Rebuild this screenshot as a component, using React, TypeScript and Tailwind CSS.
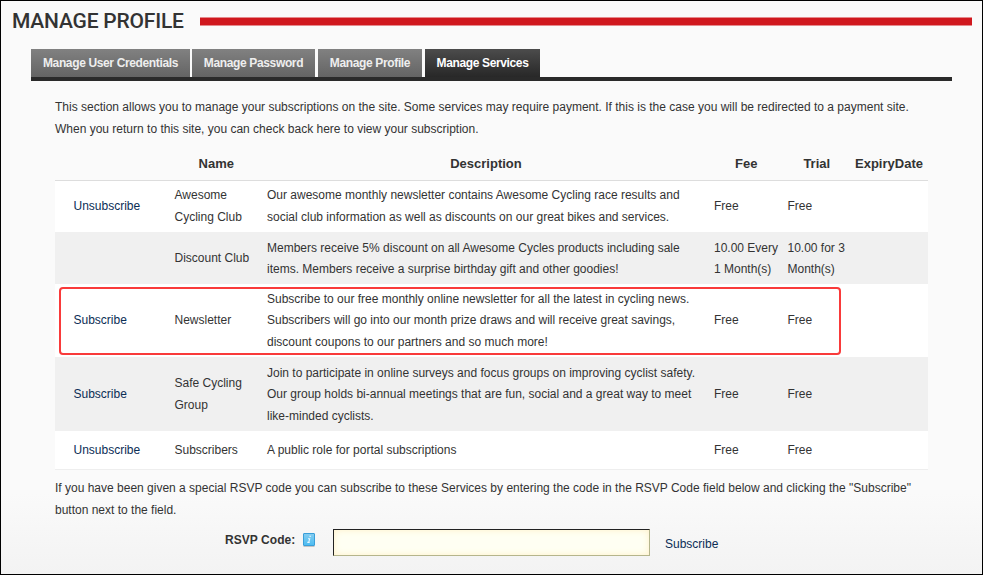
const tabs = [
  { label: 'Manage User Credentials', box: 'w-[159px] mr-[2px]' },
  { label: 'Manage Password', box: 'w-[123px] mr-[3px]' },
  { label: 'Manage Profile', box: 'w-[104px] mr-[3px]' },
];

type Row = {
  action: string;
  name: string[];
  description: string[];
  fee: string[];
  trial: string[];
  className: string;
};

const rows: Row[] = [
  {
    action: 'Unsubscribe',
    name: ['Awesome', 'Cycling Club'],
    description: [
      'Our awesome monthly newsletter contains Awesome Cycling race results and',
      'social club information as well as discounts on our great bikes and services.',
    ],
    fee: ['Free'],
    trial: ['Free'],
    className: 'h-[51px] bg-white',
  },
  {
    action: '',
    name: ['Discount Club'],
    description: [
      'Members receive 5% discount on all Awesome Cycles products including sale',
      'items. Members receive a surprise birthday gift and other goodies!',
    ],
    fee: ['10.00 Every', '1 Month(s)'],
    trial: ['10.00 for 3', 'Month(s)'],
    className: 'h-[52px] bg-[#f0f0f0] pt-[2.4px]',
  },
  {
    action: 'Subscribe',
    name: ['Newsletter'],
    description: [
      'Subscribe to our free monthly online newsletter for all the latest in cycling news.',
      'Subscribers will go into our month prize draws and will receive great savings,',
      'discount coupons to our partners and so much more!',
    ],
    fee: ['Free'],
    trial: ['Free'],
    className: 'h-[73px] bg-white pt-[1.2px]',
  },
  {
    action: 'Subscribe',
    name: ['Safe Cycling', 'Group'],
    description: [
      'Join to participate in online surveys and focus groups on improving cyclist safety.',
      'Our group holds bi-annual meetings that are fun, social and a great way to meet',
      'like-minded cyclists.',
    ],
    fee: ['Free'],
    trial: ['Free'],
    className: 'h-[74px] bg-[#f0f0f0] pt-[2px]',
  },
  {
    action: 'Unsubscribe',
    name: ['Subscribers'],
    description: ['A public role for portal subscriptions'],
    fee: ['Free'],
    trial: ['Free'],
    className: 'h-[38px] bg-white pt-[2px]',
  },
];

const columns = 'grid grid-cols-[115.5px_92.5px_447px_73.5px_67.5px_77px]';

function Lines({ items }: { items: string[] }) {
  return (
    <div className="pl-1">
      {items.map((item) => (
        <div key={item}>{item}</div>
      ))}
    </div>
  );
}

function InfoIcon() {
  return (
    <svg width="14" height="15" viewBox="0 0 14 15">
      <defs>
        <linearGradient id="info" x1="0" y1="0" x2="0" y2="1">
          <stop offset="0" stopColor="#86cdf0" />
          <stop offset="1" stopColor="#4cbcf2" />
        </linearGradient>
      </defs>
      <rect x="1.5" y="12.5" width="11" height="1.5" fill="#c4c4c4" />
      <rect x="1.5" y="0.5" width="11" height="12" rx="0.5" fill="url(#info)" stroke="#3a9fd9" />
      <path d="M7.4 3.3h1.6M6 5.8h1.7l-1 3.5M5.3 9.4h2.4" stroke="#e8f7ff" strokeWidth="1.1" fill="none" />
    </svg>
  );
}

export default function App() {
  return (
    <div className="h-[575px] w-[983px] overflow-hidden whitespace-nowrap border border-black bg-[linear-gradient(#fafafa_86%,#f3f3f3)] font-['Liberation_Sans',Arial,sans-serif] text-[12px] leading-[21.6px] text-[#333]">
      <header className="flex h-[48px] pl-[11px]">
        <h1 className="h-[40px] w-[188px] font-[Roboto,sans-serif] text-[21px] font-medium leading-[40px] tracking-[-0.2px] text-[#333]">
          MANAGE PROFILE
        </h1>
        <div className="mt-[16px] h-[9px] w-[772px] border-y border-[#e58a8d] bg-[#d0181e]" />
      </header>

      <nav className="ml-[30px] flex h-[32px] w-[921px] border-b-4 border-[#2a2a2a] font-bold leading-[28px] tracking-[-0.36px]">
        {tabs.map((tab) => (
          <div key={tab.label} className={'flex h-[28px] justify-center bg-linear-to-b from-[#818181] to-[#646464] text-[#eee] ' + tab.box}>
            {tab.label}
          </div>
        ))}
        <div className="flex h-[28px] w-[115px] justify-center bg-linear-to-b from-[#4c4c4c] to-[#282828] text-white">
          Manage Services
        </div>
      </nav>

      <main className="ml-[54px] w-[873px]">
        <div className="h-[65px] pt-[16px]">
          <p>This section allows you to manage your subscriptions on the site. Some services may require payment. If this is the case you will be redirected to a payment site.</p>
          <p>When you return to this site, you can check back here to view your subscription.</p>
        </div>

        <div className={columns + ' h-[35px] border-b border-[#ddd] text-center text-[13px] font-bold leading-[35px]'}>
          <span />
          <span className="-ml-px">Name</span>
          <span className="-ml-px">Description</span>
          <span className="-ml-px">Fee</span>
          <span className="-ml-px">Trial</span>
          <span className="-ml-px">ExpiryDate</span>
        </div>

        <div className="relative border-b border-[#eee]">
          {rows.map((row) => (
            <div key={row.name[0]} className={columns + ' items-center ' + row.className}>
              <a className="pl-[18.5px] text-[#0b2d55]">{row.action}</a>
              <Lines items={row.name} />
              <Lines items={row.description} />
              <Lines items={row.fee} />
              <Lines items={row.trial} />
            </div>
          ))}
          <div className="absolute left-[4px] top-[106px] h-[68px] w-[782px] rounded-[4px] border-2 border-[#f93a3a]" />
        </div>

        <div className="pt-[8px]">
          <p>If you have been given a special RSVP code you can subscribe to these Services by entering the code in the RSVP Code field below and clicking the "Subscribe"</p>
          <p>button next to the field.</p>
        </div>

        <div className="flex pl-[170px] pt-[8px]">
          <label className="w-[77px] pt-px text-[12px] font-bold tracking-[0.06px]">RSVP Code:</label>
          <div className="w-[31px] pt-[4px]">
            <InfoIcon />
          </div>
          <input className="h-[27px] w-[317px] border border-b-[#b5b58c] border-l-[#222] border-r-[#b5b58c] border-t-[#222] bg-[#fffff3] shadow-[inset_0_0_7px_#fff0c8] outline-none" />
          <a className="pl-[15px] pt-[5px] text-[#0b2d55]">Subscribe</a>
        </div>
      </main>
    </div>
  );
}
